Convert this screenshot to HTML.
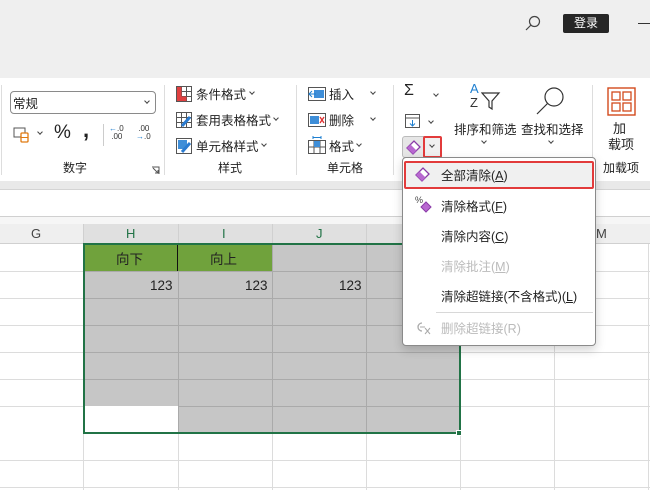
<!DOCTYPE html>
<html><head><meta charset="utf-8"><style>
*{margin:0;padding:0;box-sizing:border-box}
body{width:650px;height:490px;overflow:hidden;position:relative;background:#fff;font-family:"Liberation Sans","Noto Sans CJK SC",sans-serif;font-size:12px;color:#222}
.a{position:absolute;white-space:nowrap}
.chev{position:absolute;width:5px;height:5px;border-right:1.2px solid #444;border-bottom:1.2px solid #444;transform:rotate(45deg)}
.vl{position:absolute;width:1px;background:#ddd}
.hl{position:absolute;height:1px;background:#dcdcdc;left:0;width:650px}
.cl{position:absolute;width:1px;background:#dcdcdc;top:244px;height:246px}
</style></head><body>
<div class="a" style="left:0;top:0;width:650px;height:78px;background:#efefef"></div>
<svg class="a" style="left:524px;top:14px" width="18" height="18"><circle cx="10.5" cy="7.5" r="5" fill="none" stroke="#444" stroke-width="1.2"/><line x1="7" y1="11" x2="2" y2="16" stroke="#444" stroke-width="1.2"/></svg>
<div class="a" style="left:563px;top:14px;width:46px;height:19px;background:#262626;border-radius:2px;color:#fff;font-size:12px;text-align:center;line-height:19px">登录</div>
<div class="a" style="left:638px;top:23px;width:12px;height:1px;background:#333"></div>
<div class="a" style="left:0;top:78px;width:650px;height:103px;background:#fff"></div>
<div class="a" style="left:0;top:181px;width:650px;height:9px;background:#e9e9e9;border-bottom:1px solid #d4d4d4"></div>
<div class="vl" style="left:1px;top:85px;height:90px"></div>
<div class="vl" style="left:164px;top:85px;height:90px"></div>
<div class="vl" style="left:296px;top:85px;height:90px"></div>
<div class="vl" style="left:393px;top:85px;height:90px"></div>
<div class="vl" style="left:592px;top:85px;height:90px"></div>
<div class="a" style="left:10px;top:91px;width:146px;height:23px;border:1px solid #8a8a8a;border-radius:4px"></div>
<div class="a" style="left:13px;top:93px;font-size:12.5px">常规</div>
<div class="chev" style="left:145px;top:99px;width:4px;height:4px"></div>
<svg class="a" style="left:13px;top:126px" width="20" height="18"><rect x="1" y="2" width="11" height="9" fill="none" stroke="#555"/><rect x="8" y="7" width="7" height="9" rx="1" fill="#fff" stroke="#e07a10" stroke-width="1.3"/><line x1="8" y1="11.5" x2="15" y2="11.5" stroke="#e07a10"/></svg>
<div class="chev" style="left:38px;top:130px;width:4px;height:4px"></div>
<div class="a" style="left:54px;top:122px;font-size:19px">%</div>
<div class="a" style="left:83px;top:117px;font-size:22px;font-weight:bold">,</div>
<div class="vl" style="left:103px;top:124px;height:22px;background:#ccc"></div>
<div class="a" style="left:109px;top:125px;font-size:8px;line-height:8px;color:#333"><span style="color:#1e7fd0">←</span>.0<br>&nbsp;.00</div>
<div class="a" style="left:136px;top:125px;font-size:8px;line-height:8px;color:#333">&nbsp;.00<br><span style="color:#1e7fd0">→</span>.0</div>
<div class="a" style="left:63px;top:159px;font-size:12px">数字</div>
<svg class="a" style="left:151px;top:166px" width="9" height="9"><path d="M1 1H8V8" fill="none" stroke="#555"/><path d="M2 2L7 7M7 4V7H4" fill="none" stroke="#555"/></svg>
<svg class="a" style="left:176px;top:86px" width="16" height="16"><rect x=".5" y=".5" width="15" height="15" fill="#fff" stroke="#555"/><path d="M5.5 1V15M10.5 1V15M1 5.5H15M1 10.5H15" stroke="#555"/><rect x="1" y="1" width="4.5" height="14" fill="#e04040"/><rect x="5.5" y="10.5" width="5" height="4.5" fill="#e04040"/></svg>
<div class="a" style="left:196px;top:84px;font-size:12.5px">条件格式</div><div class="chev" style="left:250px;top:90px;width:4px;height:4px"></div>
<svg class="a" style="left:176px;top:112px" width="16" height="16"><rect x=".5" y=".5" width="15" height="15" fill="#fff" stroke="#555"/><path d="M5.5 1V15M10.5 1V15M1 5.5H15M1 10.5H15" stroke="#555"/><path d="M6 14L14 5" stroke="#2a7bd0" stroke-width="3"/></svg>
<div class="a" style="left:196px;top:110px;font-size:12.5px">套用表格格式</div><div class="chev" style="left:274px;top:116px;width:4px;height:4px"></div>
<svg class="a" style="left:176px;top:138px" width="16" height="16"><rect x=".5" y=".5" width="15" height="15" fill="#fff" stroke="#555"/><rect x="2" y="2" width="9" height="9" fill="#3e8ed8"/><path d="M6 14L14 5" stroke="#2a7bd0" stroke-width="3"/></svg>
<div class="a" style="left:196px;top:136px;font-size:12.5px">单元格样式</div><div class="chev" style="left:262px;top:142px;width:4px;height:4px"></div>
<div class="a" style="left:218px;top:159px;font-size:12px">样式</div>
<svg class="a" style="left:308px;top:86px" width="18" height="16"><rect x=".5" y="1.5" width="17" height="13" fill="#fff" stroke="#555"/><rect x="6" y="4" width="10" height="8" fill="#3e8ed8"/><path d="M1 8H8M4 5L1 8L4 11" stroke="#1e7fd0" fill="none"/></svg>
<div class="a" style="left:329px;top:84px;font-size:12.5px">插入</div><div class="chev" style="left:371px;top:90px;width:4px;height:4px"></div>
<svg class="a" style="left:308px;top:112px" width="18" height="16"><rect x=".5" y="1.5" width="17" height="13" fill="#fff" stroke="#555"/><rect x="2" y="4" width="9" height="8" fill="#3e8ed8"/><path d="M12 5L16 11M16 5L12 11" stroke="#e03030" stroke-width="1.3"/></svg>
<div class="a" style="left:329px;top:110px;font-size:12.5px">删除</div><div class="chev" style="left:371px;top:116px;width:4px;height:4px"></div>
<svg class="a" style="left:308px;top:136px" width="18" height="18"><rect x=".5" y="4.5" width="17" height="13" fill="#fff" stroke="#555"/><path d="M6 5V17M12 5V17M1 11H17" stroke="#555"/><rect x="6" y="5" width="6" height="6" fill="#3e8ed8"/><path d="M5 1.5H13M5 0V3M13 0V3" stroke="#1e7fd0"/></svg>
<div class="a" style="left:329px;top:136px;font-size:12.5px">格式</div><div class="chev" style="left:357px;top:142px;width:4px;height:4px"></div>
<div class="a" style="left:327px;top:159px;font-size:12px">单元格</div>
<div class="a" style="left:404px;top:82px;font-size:16px">Σ</div><div class="chev" style="left:434px;top:92px;width:4px;height:4px"></div>
<svg class="a" style="left:405px;top:114px" width="16" height="15"><rect x=".5" y=".5" width="14" height="13" fill="#fff" stroke="#555"/><path d="M1 4H14" stroke="#555"/><path d="M7.5 6V12M5 9.5L7.5 12L10 9.5" stroke="#1e7fd0" fill="none"/></svg>
<div class="chev" style="left:429px;top:119px;width:4px;height:4px"></div>
<div class="a" style="left:402px;top:136px;width:40px;height:22px;background:#e6e6e6;border:1px solid #bbb;border-radius:3px"></div>
<svg class="a" style="left:405px;top:138px" width="18" height="18"><path d="M2 10L9 3L15 9L8 16Z" fill="#fff" stroke="#8a3aa8" stroke-width="1.3"/><path d="M2 10L5.5 6.5L11.5 12.5L8 16Z" fill="#b868d0"/></svg>
<div class="a" style="left:423px;top:136px;width:19px;height:22px;border:2px solid #e23b3b;border-radius:2px;background:#f0f0f0"></div>
<div class="chev" style="left:430px;top:143px;width:4px;height:4px"></div>
<div class="a" style="left:470px;top:83px;color:#1e7fd0;font-size:13px;line-height:12px">A</div>
<div class="a" style="left:470px;top:97px;color:#333;font-size:13px;line-height:12px">Z</div>
<svg class="a" style="left:481px;top:91px" width="20" height="20"><path d="M1 2H18L11 10V18L8 16V10Z" fill="none" stroke="#333" stroke-width="1.2"/></svg>
<div class="a" style="left:454px;top:119px;font-size:12.5px">排序和筛选</div><div class="chev" style="left:482px;top:139px;width:4px;height:4px"></div>
<svg class="a" style="left:535px;top:85px" width="32" height="32"><circle cx="19" cy="12" r="9" fill="none" stroke="#333" stroke-width="1.2"/><line x1="12.5" y1="18.5" x2="2" y2="29" stroke="#333" stroke-width="1.2"/></svg>
<div class="a" style="left:521px;top:119px;font-size:12.5px">查找和选择</div><div class="chev" style="left:549px;top:139px;width:4px;height:4px"></div>
<svg class="a" style="left:607px;top:87px" width="29" height="29"><rect x="1" y="1" width="27" height="27" fill="none" stroke="#d24a1c" stroke-width="1.4"/><rect x="5" y="5" width="8" height="8" fill="none" stroke="#d24a1c" stroke-width="1.3"/><rect x="16" y="5" width="8" height="8" fill="none" stroke="#d24a1c" stroke-width="1.3"/><rect x="5" y="16" width="8" height="8" fill="none" stroke="#d24a1c" stroke-width="1.3"/><rect x="16" y="16" width="8" height="8" fill="none" stroke="#d24a1c" stroke-width="1.3"/></svg>
<div class="a" style="left:613px;top:118px;font-size:13px">加</div>
<div class="a" style="left:608px;top:134px;font-size:13px">载项</div>
<div class="a" style="left:603px;top:159px;font-size:12px">加载项</div>
<div class="hl" style="top:216px;background:#d0d0d0"></div>
<div class="a" style="left:0;top:217px;width:650px;height:7px;background:#f6f6f6"></div>
<div class="a" style="left:0;top:224px;width:650px;height:20px;background:#efefef;border-bottom:1px solid #d0d0d0"></div>
<div class="a" style="left:83px;top:224px;width:377px;height:20px;background:#e0e0e0;border-bottom:1px solid #c4c4c4"></div>
<div class="a" style="left:83px;top:224px;width:1px;height:20px;background:#d0d0d0"></div>
<div class="a" style="left:178px;top:224px;width:1px;height:20px;background:#d0d0d0"></div>
<div class="a" style="left:272px;top:224px;width:1px;height:20px;background:#d0d0d0"></div>
<div class="a" style="left:366px;top:224px;width:1px;height:20px;background:#d0d0d0"></div>
<div class="a" style="left:31px;top:226px;font-size:13px;color:#444">G</div>
<div class="a" style="left:126px;top:226px;font-size:13px;color:#217346">H</div>
<div class="a" style="left:222px;top:226px;font-size:13px;color:#217346">I</div>
<div class="a" style="left:316px;top:226px;font-size:13px;color:#217346">J</div>
<div class="a" style="left:596px;top:226px;font-size:13px;color:#444">M</div>
<div class="hl" style="top:271px"></div><div class="hl" style="top:298px"></div><div class="hl" style="top:325px"></div><div class="hl" style="top:352px"></div><div class="hl" style="top:379px"></div><div class="hl" style="top:406px"></div><div class="hl" style="top:460px"></div><div class="hl" style="top:487px"></div>
<div class="cl" style="left:83px"></div><div class="cl" style="left:178px"></div><div class="cl" style="left:272px"></div><div class="cl" style="left:366px"></div><div class="cl" style="left:460px"></div><div class="cl" style="left:554px"></div><div class="cl" style="left:648px"></div>
<div class="a" style="left:85px;top:245px;width:374px;height:187px;background:#c6c6c6"></div>
<div class="a" style="left:85px;top:406px;width:93px;height:26px;background:#fff"></div>
<div class="a" style="left:85px;top:245px;width:187px;height:26px;background:#70a23c"></div>
<div class="a" style="left:177px;top:245px;width:1px;height:26px;background:#111"></div>
<div class="a" style="left:85px;top:271px;width:374px;height:1px;background:#aaa"></div>
<div class="a" style="left:85px;top:298px;width:374px;height:1px;background:#aaa"></div>
<div class="a" style="left:85px;top:325px;width:374px;height:1px;background:#aaa"></div>
<div class="a" style="left:85px;top:352px;width:374px;height:1px;background:#aaa"></div>
<div class="a" style="left:85px;top:379px;width:374px;height:1px;background:#aaa"></div>
<div class="a" style="left:178px;top:406px;width:281px;height:1px;background:#aaa"></div>
<div class="a" style="left:178px;top:271px;width:1px;height:161px;background:#aaa"></div>
<div class="a" style="left:272px;top:271px;width:1px;height:161px;background:#aaa"></div>
<div class="a" style="left:366px;top:245px;width:1px;height:187px;background:#aaa"></div>
<div class="a" style="left:272px;top:245px;width:1px;height:26px;background:#aaa"></div>
<div class="a" style="left:116px;top:248px;font-size:13.5px">向下</div>
<div class="a" style="left:210px;top:248px;font-size:13.5px">向上</div>
<div class="a" style="left:150px;top:278px;font-size:13.5px">123</div>
<div class="a" style="left:245px;top:278px;font-size:13.5px">123</div>
<div class="a" style="left:339px;top:278px;font-size:13.5px">123</div>
<div class="a" style="left:83px;top:243px;width:378px;height:191px;border:2px solid #217346"></div>
<div class="a" style="left:456px;top:430px;width:6px;height:6px;background:#217346;border:1px solid #fff"></div>
<div class="a" style="left:402px;top:157px;width:194px;height:189px;background:#fff;border:1px solid #8a8a8a;border-radius:4px;box-shadow:0 4px 10px rgba(0,0,0,.18)"></div>
<div class="a" style="left:404px;top:161px;width:190px;height:28px;background:#f0f0f0;border:2px solid #e23b3b;border-radius:2px"></div>
<svg class="a" style="left:414px;top:166px" width="18" height="18"><path d="M2 9L9 2L15 8L8 15Z" fill="#fff" stroke="#8a3aa8" stroke-width="1.3"/><path d="M2 9L5.5 5.5L11.5 11.5L8 15Z" fill="#b868d0"/></svg>
<div class="a" style="left:441px;top:165px;font-size:12.5px">全部清除(<u>A</u>)</div>
<div class="a" style="left:415px;top:195px;font-size:9px;color:#444">%</div>
<svg class="a" style="left:420px;top:201px" width="12" height="12"><path d="M1 6L6 1L11 6L6 11Z" fill="#b868d0" stroke="#8a3aa8"/></svg>
<div class="a" style="left:441px;top:196px;font-size:12.5px">清除格式(<u>F</u>)</div>
<div class="a" style="left:441px;top:226px;font-size:12.5px">清除内容(<u>C</u>)</div>
<div class="a" style="left:441px;top:256px;font-size:12.5px;color:#bbb">清除批注(<u>M</u>)</div>
<div class="a" style="left:441px;top:286px;font-size:12.5px">清除超链接(不含格式)(<u>L</u>)</div>
<div class="a" style="left:436px;top:312px;width:157px;height:1px;background:#d8d8d8"></div>
<svg class="a" style="left:415px;top:320px" width="18" height="16"><path d="M7 3A4 4 0 1 0 7 11" fill="none" stroke="#aaa" stroke-width="1.3"/><path d="M5 7H10" stroke="#aaa"/><path d="M10 8L15 14M15 8L10 14" stroke="#aaa"/></svg>
<div class="a" style="left:441px;top:318px;font-size:12.5px;color:#bbb">删除超链接(R)</div>
</body></html>
